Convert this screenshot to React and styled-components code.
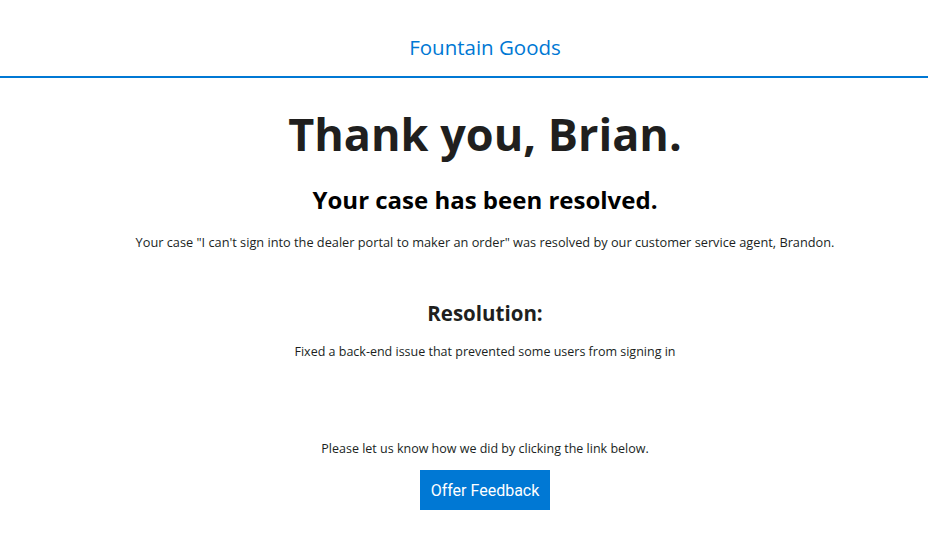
import React from 'react'
import styled, { createGlobalStyle } from 'styled-components'

const GlobalStyle = createGlobalStyle`
  html, body {
    margin: 0;
    padding: 0;
    background: #ffffff;
  }
  body {
    font-family: "Open Sans", "Noto Sans", sans-serif;
    color: #201f1e;
  }
`;

const App = () => {
  return (
    <Page>
      <GlobalStyle />
      <Header>
        <Brand>Fountain Goods</Brand>
      </Header>
      <Main>
        <Title>Thank you, Brian.</Title>
        <Subtitle>Your case has been resolved.</Subtitle>
        <Intro>Your case "I can't sign into the dealer portal to maker an order" was resolved by our customer service agent, Brandon.</Intro>
        <Section>
          <SectionTitle>Resolution:</SectionTitle>
          <Text>Fixed a back-end issue that prevented some users from signing in</Text>
        </Section>
        <Footer>
          <Text>Please let us know how we did by clicking the link below.</Text>
          <Button>Offer Feedback</Button>
        </Footer>
      </Main>
    </Page>
  );
}

export default App;

const Page = styled.div`
  width: 100%;
`;

const Header = styled.header`
  height: 78px;
  padding: 34px 0 16px 42px;
  border-bottom: 2px solid #0078d4;
  display: flex;
  justify-content: center;
  box-sizing: border-box;
`;

const Brand = styled.div`
  color: #0078d4;
  font-size: 20.5px;
  line-height: 26px;
`;

const Main = styled.main`
  display: flex;
  flex-direction: column;
  align-items: center;
  padding-left: 42px;
  text-align: center;
`;

const Title = styled.h1`
  margin: 24px 0 0;
  font-size: 45px;
  line-height: 64px;
  font-weight: 700;
  color: #201f1e;
`;

const Subtitle = styled.h2`
  margin: 18px 0 0;
  font-size: 24px;
  line-height: 32px;
  font-weight: 700;
  color: #000;
`;

const Text = styled.p`
  margin: 0;
  font-size: 12.5px;
  line-height: 18px;
  color: #201f1e;
`;

const Intro = styled(Text)`
  margin-top: 17px;
  font-size: 12.75px;
`;

const Section = styled.section`
  margin-top: 48px;
  display: flex;
  flex-direction: column;
  align-items: center;
  gap: 16px;
`;

const SectionTitle = styled.h3`
  margin: 0;
  font-size: 20.5px;
  line-height: 28px;
  font-weight: 700;
`;

const Footer = styled.div`
  margin-top: 79px;
  display: flex;
  flex-direction: column;
  align-items: center;
  gap: 12px;
`;

const Button = styled.button`
  width: 130px;
  height: 40px;
  border: none;
  background: #0078d4;
  color: #ffffff;
  font-family: Roboto, "Liberation Sans", sans-serif;
  font-size: 16px;
  cursor: pointer;
`;
